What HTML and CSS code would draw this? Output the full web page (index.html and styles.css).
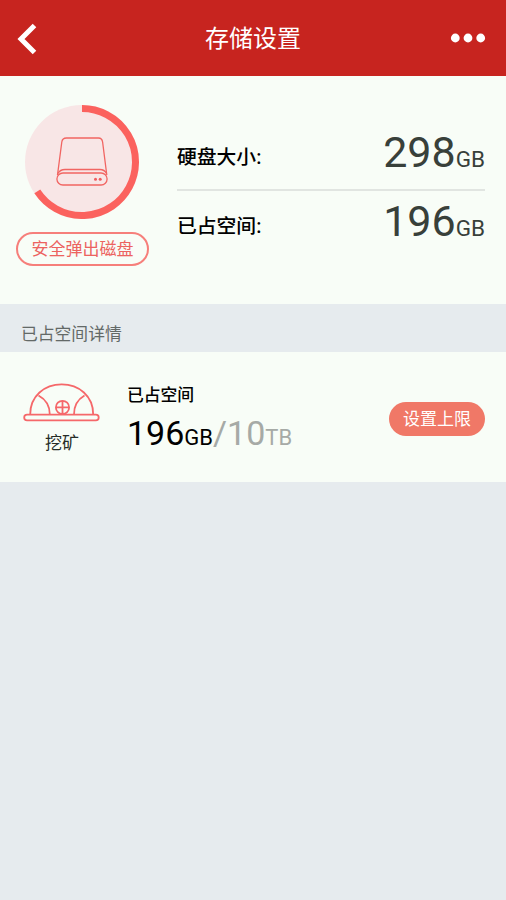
FILE: index.html
```html
<!DOCTYPE html>
<html lang="zh-CN">
<head>
<meta charset="utf-8">
<title>存储设置</title>
<link rel="stylesheet" href="styles.css">
</head>
<body>
<header class="topbar">
  <svg class="back" width="20" height="32" viewBox="0 0 20 32"><path d="M17.500 2.500 4 16l13.500 13.500" fill="none" stroke="#fff" stroke-width="5"/></svg>
  <h1 class="title">存储设置</h1>
  <svg class="more" width="36" height="10" viewBox="0 0 36 10" fill="#fff"><circle cx="5.300" cy="5" r="4.400"/><circle cx="18" cy="5" r="4.400"/><circle cx="30.700" cy="5" r="4.400"/></svg>
</header>
<section class="disk">
  <div class="disk-left">
    <svg class="ring" width="114" height="114" viewBox="0 0 114 114" fill="none">
      <circle cx="57" cy="57" r="57" fill="#f8e6e6"/>
      <path d="M57 3.500A53.500 53.500 0 1 1 12.300 86.400" stroke="#fb625e" stroke-width="7"/>
      <g stroke="#f16562" stroke-width="1.300">
        <path d="M32.500 70 36.800 37Q37.400 33 41.400 33H73.500Q77 33 77.600 37L81.800 70"/>
        <path d="M33 68.500Q35 64.500 40 64.500H75Q79.500 64.500 81.500 68.500"/>
        <rect x="31.900" y="68" width="50.200" height="12" rx="6"/>
      </g>
      <circle cx="70.500" cy="74.300" r="1.500" fill="#ef5d60"/><circle cx="75.200" cy="74.300" r="1.500" fill="#ef5d60"/>
    </svg>
    <button class="eject">安全弹出磁盘</button>
  </div>
  <div class="stats">
    <div class="stat"><span class="label">硬盘大小:</span><span class="value">298<small>GB</small></span></div>
    <div class="stat"><span class="label">已占空间:</span><span class="value">196<small>GB</small></span></div>
  </div>
</section>
<h2 class="section-title">已占空间详情</h2>
<section class="usage">
  <div class="app">
    <svg width="78" height="40" viewBox="0 0 78 40" fill="none" stroke="#f5686a" stroke-width="1.800">
      <rect x="1.200" y="31.600" width="74.500" height="5.700" rx="2.850"/>
      <path d="M7.200 31.400C7.200 13 21.500 1.400 38.700 1.400S70.200 13 70.200 31.400"/>
      <path d="M15.500 12.500Q26.700 18.500 26.800 31.400M61.500 12.500Q51 18.500 51 31.400"/>
      <circle cx="39.500" cy="24.400" r="6.600"/><path d="M39.500 17.800v13.200M32.900 24.400h13.200"/>
    </svg>
    <span class="app-name">挖矿</span>
  </div>
  <div class="detail">
    <span class="detail-label">已占空间</span>
    <span class="amount">196<small>GB</small><span class="limit">/10<small>TB</small></span></span>
  </div>
  <button class="set-limit">设置上限</button>
</section>
</body>
</html>
```
FILE: styles.css
```css
* { box-sizing: border-box; }
body {
  margin: 0;
  min-height: 900px;
  background: #e6ebee;
  color: #000;
  font-family: Roboto, "Noto Sans CJK SC", sans-serif;
}
svg { display: block; flex: none; }
button { font: inherit; padding: 0; }
.topbar {
  height: 76px;
  padding: 0 20px 0 17px;
  display: flex;
  align-items: center;
  justify-content: space-between;
  background: #c7241f;
  color: #fff;
}
.back { margin: 2px 19px 0 0; }
.title { margin: 2px 0 0; font-size: 24px; font-weight: 400; line-height: 36px; }
.disk {
  height: 228px;
  padding: 29px 21px 0 16px;
  display: flex;
  gap: 28px;
  background: #f8fdf7;
}
.disk-left {
  width: 133px;
  display: flex;
  flex-direction: column;
}
.ring { margin-left: 9px; }
.eject {
  width: 133px;
  height: 34px;
  margin-top: 13px;
  border: 2px solid #f67f7b;
  border-radius: 17px;
  background: transparent;
  color: #ec6360;
  font-size: 17px;
  line-height: 30px;
}
.stats { flex: 1; padding-top: 17px; }
.stat {
  height: 67px;
  display: flex;
  align-items: center;
  justify-content: space-between;
}
.stat:first-child { height: 69px; border-bottom: 2px solid #e1e5e1; }
.label { margin-top: 5px; font-size: 19.800px; font-weight: 500; line-height: 30px; }
.value { font-size: 43px; line-height: 50px; color: #38403a; }
.value small { font-size: 22.500px; }
.section-title {
  height: 48px;
  margin: 0;
  padding: 17px 21px 0;
  font-size: 16.800px;
  font-weight: 400;
  line-height: 26px;
  color: #636967;
}
.usage {
  height: 130px;
  padding: 0 21px 0 23px;
  display: flex;
  background: #f8fdf7;
}
.app {
  width: 78px;
  padding-top: 31px;
  display: flex;
  flex-direction: column;
  align-items: center;
}
.app-name { margin-top: 7px; font-size: 17px; line-height: 26px; color: #252c27; }
.detail {
  flex: 1;
  margin-left: 26px;
  padding-top: 30px;
  display: flex;
  flex-direction: column;
}
.detail-label { font-size: 16.800px; font-weight: 500; line-height: 26px; }
.amount { font-size: 34px; line-height: 40px; margin-top: 5px; white-space: nowrap; }
.amount small { font-size: 22px; }
.limit { color: #a6aaa6; }
.set-limit {
  width: 96px;
  height: 34px;
  margin-top: 50px;
  border: 0;
  border-radius: 17px;
  background: #f07867;
  color: #fff;
  font-size: 17px;
  line-height: 34px;
}
```
